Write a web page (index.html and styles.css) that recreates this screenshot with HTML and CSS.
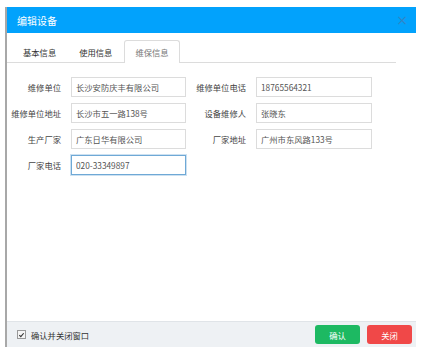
FILE: index.html
```html
<!DOCTYPE html>
<html lang="zh-CN">
<head>
  <meta charset="UTF-8" />
  <link rel="stylesheet" href="styles.css">
</head>
<body>

  <div class="dialog">
    <div class="dialog-header">
      <span class="dialog-title">编辑设备</span>
      <span class="dialog-close">&times;</span>
    </div>

    <div class="tabs">
      <a class="tab">基本信息</a>
      <a class="tab">使用信息</a>
      <a class="tab active">维保信息</a>
    </div>

    <form class="form-grid">
      <label>维修单位</label>
      <input type="text" value="长沙安防庆丰有限公司" />
      <label>维修单位电话</label>
      <input type="text" value="18765564321" />

      <label>维修单位地址</label>
      <input type="text" value="长沙市五一路138号" />
      <label>设备维修人</label>
      <input type="text" value="张晓东" />

      <label>生产厂家</label>
      <input type="text" value="广东日华有限公司" />
      <label>厂家地址</label>
      <input type="text" value="广州市东风路133号" />

      <label>厂家电话</label>
      <input type="text" class="focused" value="020-33349897" />
    </form>

    <div class="dialog-footer">
      <label class="check">
        <span class="check-box">
          <svg width="8" height="8" viewBox="0 0 8 8"><path d="M1.5 4.2 L3.2 5.8 L6.5 2" fill="none" stroke="#333" stroke-width="1.3"/></svg>
        </span>
        确认并关闭窗口
      </label>
      <div class="buttons">
        <button type="button" class="btn btn-ok">确认</button>
        <button type="button" class="btn btn-close">关闭</button>
      </div>
    </div>
  </div>

</body>
</html>
```

FILE: styles.css
```css
body {
  margin: 0;
  background-color: white;
  font-family: "Noto Sans CJK SC", "Liberation Sans", sans-serif;
  font-size: 8.3px;
  color: #333;
}

.dialog {
  margin: 7px 0 0 5px;
  width: 409px;
  height: 340px;
  border-left: 2px solid #a8a8a8;
  display: flex;
  flex-direction: column;
  box-sizing: content-box;
}

.dialog-header {
  height: 26px;
  background-color: #02a2fc;
  display: flex;
  align-items: center;
  justify-content: space-between;
  padding: 0 8px 0 10px;
}

.dialog-title {
  color: white;
  font-size: 10px;
}

.dialog-close {
  color: #2f86c8;
  font-family: "DejaVu Sans", sans-serif;
  font-size: 14px;
  line-height: 1;
}

.tabs {
  display: flex;
  gap: 1px;
  margin-top: 7px;
  padding-left: 5px;
  width: 384px;
  height: 22px;
  border-bottom: 1px solid #dcdcdc;
}

.tab {
  display: flex;
  align-items: center;
  padding: 0 10px;
  height: 22px;
  color: #333;
  border: 1px solid transparent;
  border-bottom: none;
  border-radius: 3px 3px 0 0;
  box-sizing: border-box;
}

.tab.active {
  color: #777;
  background-color: white;
  border-color: #dcdcdc;
  height: 23px;
}

.form-grid {
  display: grid;
  grid-template-columns: 54px 115px 50px 116px;
  column-gap: 10px;
  row-gap: 6px;
  margin: 14px 0 0 0;
  align-items: center;
}

.form-grid label {
  text-align: right;
  white-space: nowrap;
  color: #444;
}

.form-grid input {
  height: 20px;
  box-sizing: border-box;
  border: 1px solid #dcdcdc;
  padding: 0 4px;
  font-family: inherit;
  font-size: 8.3px;
  color: #555;
  outline: none;
}

.form-grid input.focused {
  border: 1px solid #6fa9d6;
  box-shadow: 0 0 0 1px rgba(111, 169, 214, 0.35);
}

.dialog-footer {
  margin-top: auto;
  height: 25px;
  background-color: #eef1f4;
  border-top: 1px solid #e0e4e8;
  display: flex;
  align-items: center;
  justify-content: space-between;
  padding: 0 4px 0 10px;
}

.check {
  display: flex;
  align-items: center;
  gap: 5px;
  color: #333;
}

.check-box {
  width: 7px;
  height: 7px;
  border: 1px solid #999;
  background-color: #f4f4f4;
  display: flex;
  align-items: center;
  justify-content: center;
}

.buttons {
  display: flex;
  gap: 7px;
}

.btn {
  width: 45px;
  height: 19px;
  border: none;
  border-radius: 3px;
  color: white;
  font-family: inherit;
  font-size: 8.3px;
  padding: 0;
  cursor: pointer;
}

.btn-ok {
  background-color: #1db962;
}

.btn-close {
  background-color: #f04848;
}
```
